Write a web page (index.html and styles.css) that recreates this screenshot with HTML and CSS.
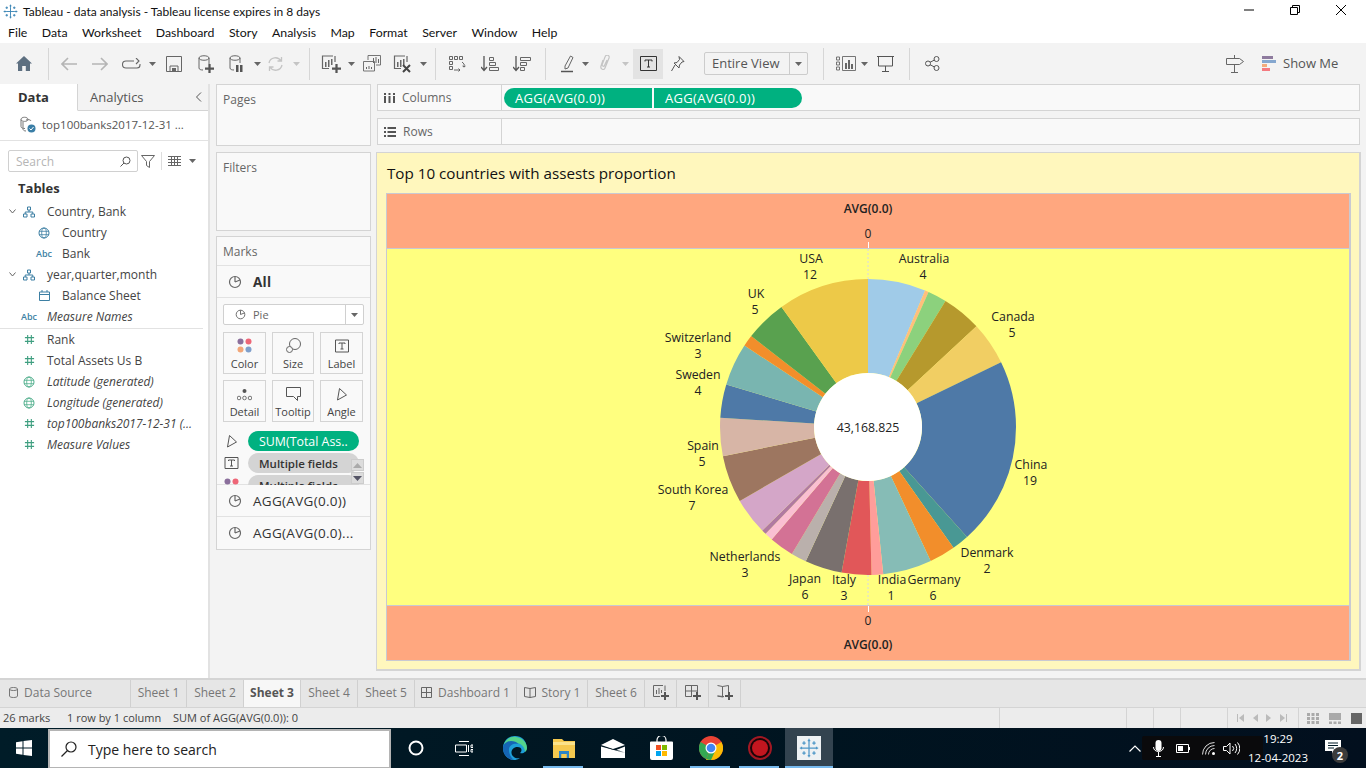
FILE: index.html
```html
<!DOCTYPE html>
<html lang="en">
<head>
    <meta charset="UTF-8">
    <title>Tableau - data analysis</title>
    <link rel="stylesheet" href="styles.css">
</head>
<body>

<svg class="defs" xmlns="http://www.w3.org/2000/svg">
    <symbol id="i-tableau" viewBox="0 0 24 24"><path d="M12 5v14M5 12h14M12 1v4M10.500 3h3M12 19v4M10.500 21h3M1 12h4M3 10.500v3M19 12h4M21 10.500v3M6 4v4M4 6h4M18 4v4M16 6h4M6 16v4M4 18h4M18 16v4M16 18h4" fill="none" stroke="currentColor" stroke-width="1.500"/></symbol>
    <symbol id="i-pie" viewBox="0 0 14 14"><circle cx="7" cy="7" r="5.500" fill="none" stroke="#666" stroke-width="1.200"/><path d="M7 7V1.500M7 7l5-2" fill="none" stroke="#666" stroke-width="1.200"/></symbol>
    <symbol id="i-hash" viewBox="0 0 12 12"><path d="M4 1v10M8 1v10M1 4h10M1 8h10" fill="none" stroke="#3f9f80" stroke-width="1.200"/></symbol>
    <symbol id="i-globe" viewBox="0 0 12 12"><circle cx="6" cy="6" r="5" fill="none" stroke="currentColor"/><ellipse cx="6" cy="6" rx="2.300" ry="5" fill="none" stroke="currentColor" stroke-width=".8"/><path d="M1 4.300h10M1 7.700h10" stroke="currentColor" stroke-width=".8"/></symbol>
    <symbol id="i-tree" viewBox="0 0 12 12"><path d="M4.500 1h3v3h-3zM.5 8h3.500v3H.5zM8 8h3.500v3H8zM6 4v2M2.200 8V6h7.600v2" fill="none" stroke="#3d7fa3"/></symbol>
    <symbol id="i-plus" viewBox="0 0 8 8"><path d="M3 0h2v3h3v2H5v3H3V5H0V3h3z" fill="#555"/></symbol>
    <symbol id="i-caret" viewBox="0 0 7 4"><path d="M0 0h7L3.500 4z" fill="currentColor"/></symbol>
    <symbol id="i-chart" viewBox="0 0 16 16"><path d="M12 1H1.500v12.500H8" fill="none" stroke="#666" stroke-width="1.200"/><path d="M14 1v6" stroke="#666" stroke-width="1.200"/><path d="M4 7h1.500v5H4zM7 5h1.500v7H7zM10 4h1.500v6H10z" fill="#666"/></symbol>
</svg>

<div class="app">
    <header class="titlebar">
        <svg class="title-logo"><use href="#i-tableau"/></svg>
        <span class="title-text">Tableau - data analysis - Tableau license expires in 8 days</span>
        <div class="win-btns">
            <svg width="12" height="12" viewBox="0 0 12 12"><path d="M1 6h10" stroke="#000"/></svg>
            <svg width="12" height="12" viewBox="0 0 12 12"><path d="M1.500 3.500h7v7h-7zM3.500 3.500v-2h7v7h-2" fill="none" stroke="#000"/></svg>
            <svg width="12" height="12" viewBox="0 0 12 12"><path d="M1 1l10 10M11 1L1 11" stroke="#000"/></svg>
        </div>
    </header>

    <nav class="menubar">
        <span>File</span><span>Data</span><span>Worksheet</span><span>Dashboard</span><span>Story</span><span>Analysis</span><span>Map</span><span>Format</span><span>Server</span><span>Window</span><span>Help</span>
    </nav>

    <div class="toolbar">
        <svg width="16" height="15" viewBox="0 0 16 15"><path d="M8 0l8 7.500h-2V15H9.800v-5H6.200v5H2V7.500H0z" fill="#5d6f80"/></svg>
        <i class="sep"></i>
        <svg width="16" height="14" viewBox="0 0 16 14"><path d="M7 1L1 7l6 6M1 7h15" fill="none" stroke="#b5b5b5" stroke-width="1.600"/></svg>
        <svg width="16" height="14" viewBox="0 0 16 14"><path d="M9 1l6 6-6 6M0 7h15" fill="none" stroke="#b5b5b5" stroke-width="1.600"/></svg>
        <svg width="19" height="12" viewBox="0 0 19 12"><path d="M12 3H4a3 3 0 0 0 0 7h11a3 3 0 0 0 3-3V6M14 0l3 3-3 3" fill="none" stroke="#666" stroke-width="1.100"/></svg>
        <svg class="caret"><use href="#i-caret"/></svg>
        <svg width="16" height="16" viewBox="0 0 16 16"><path d="M.5.500h15v15H.5zM4 15.500V10h8v5.500" fill="none" stroke="#666"/><path d="M6 12h4v3H6z" fill="#666"/></svg>
        <svg width="16" height="18" viewBox="0 0 16 18"><path d="M11 9V3c0-3-10-3-10 0v10c0 1.500 2 2 4 2M1 3c0 3 10 3 10 0" fill="none" stroke="#666"/><use href="#i-plus" x="7" y="9" width="9" height="9"/></svg>
        <svg width="15" height="18" viewBox="0 0 15 18"><path d="M11 8V3c0-3-10-3-10 0v10c0 1.500 2 2 4 2M1 3c0 3 10 3 10 0" fill="none" stroke="#666"/><path d="M7 10h2.500v7H7zM11 10h2.500v7H11z" fill="#555"/></svg>
        <svg class="caret"><use href="#i-caret"/></svg>
        <svg width="17" height="16" viewBox="0 0 17 16"><path d="M2 7a6.500 6.500 0 0 1 12-2M15 9a6.500 6.500 0 0 1-12 2M14.500 1v4h-4M2.500 15v-4h4" fill="none" stroke="#c4c4c4" stroke-width="1.300"/></svg>
        <svg class="caret caret--off"><use href="#i-caret"/></svg>
        <i class="sep"></i>
        <svg width="20" height="18" viewBox="0 0 20 18"><use href="#i-chart" width="16" height="16"/><use href="#i-plus" x="11" y="9" width="9" height="9"/></svg>
        <svg class="caret"><use href="#i-caret"/></svg>
        <svg width="18" height="18" viewBox="0 0 18 18"><path d="M5 5V.500h12.500V10H13M.5 6.500h11V16H.5z" fill="#f3f3f3" stroke="#666" stroke-width=".9"/><path d="M10 3h1v5h-1zM12.500 2h1v6h-1zM15 4h1v4h-1zM3 12h1v2H3zM5.500 11h1v3h-1zM8 12h1v2H8z" fill="#666"/></svg>
        <svg width="19" height="18" viewBox="0 0 19 18"><use href="#i-chart" width="16" height="16"/><path d="M10 10l7 7M17 10l-7 7" stroke="#444" stroke-width="2"/></svg>
        <svg class="caret"><use href="#i-caret"/></svg>
        <i class="sep"></i>
        <svg width="17" height="16" viewBox="0 0 17 16"><path d="M.5.500h3v3h-3zM5.500.500h3v3h-3zM10.500.500h3v3h-3zM.5 5.500h3v3h-3zM.5 10.500h3v3h-3zM5 14h6l-1.500-1.500M11 14l-1.500 1.500M13 6a4 4 0 0 1 2 5l-1.500-1M15 11l1.500-1" fill="none" stroke="#555" stroke-width=".9"/></svg>
        <svg width="18" height="16" viewBox="0 0 18 16"><path d="M3 0v14M0 11l3 3.500L6 11" fill="none" stroke="#555" stroke-width="1.300"/><path d="M8.500 1.500h4v3h-4zM8.500 6.500h6v3h-6zM8.500 11.500h9v3h-9z" fill="none" stroke="#666"/></svg>
        <svg width="18" height="16" viewBox="0 0 18 16"><path d="M3 0v14M0 11l3 3.500L6 11" fill="none" stroke="#555" stroke-width="1.300"/><path d="M7.500 1.500h10v3h-10zM7.500 6.500h6v3h-6zM7.500 11.500h4v3h-4z" fill="none" stroke="#666"/></svg>
        <i class="sep"></i>
        <svg width="14" height="18" viewBox="0 0 14 18"><path d="M4 11L9.500 1l2.500 1.500L7 13l-3 1z" fill="none" stroke="#666"/><path d="M0 16.500h12" stroke="#555" stroke-width="1.500"/></svg>
        <svg class="caret"><use href="#i-caret"/></svg>
        <svg width="12" height="18" viewBox="0 0 12 18"><path d="M4 5L2 11c-1 3 3 5 4 2l4-10c1-3-3-4-4-1L3 10c0 1 2 2 2.500 .5L8 5" fill="none" stroke="#c4c4c4" stroke-width="1.200"/></svg>
        <svg class="caret caret--off"><use href="#i-caret"/></svg>
        <div class="tb-active">
            <svg width="17" height="15" viewBox="0 0 17 15"><path d="M.5.500h16v14H.5z" fill="none" stroke="#333"/><path d="M5 4h7v1.500M5 5.500V4M8.500 4v7M7 11h3" fill="none" stroke="#333"/></svg>
        </div>
        <svg width="14" height="16" viewBox="0 0 14 16"><path d="M8 .5l5 5-2 .5-2.500 3-.5 3-5-5 3-.5 2.500-3zM4 9l-3.500 6" fill="none" stroke="#555"/></svg>
        <div class="fit-box">
            <span class="fit-text">Entire View</span>
            <span class="fit-arrow"><svg class="caret"><use href="#i-caret"/></svg></span>
        </div>
        <i class="sep"></i>
        <svg width="20" height="15" viewBox="0 0 20 15"><path d="M.5 1h3v3h-3zM.5 6h3v3h-3zM.5 11h3v3h-3zM6.500.5h13v14h-13z" fill="none" stroke="#666" stroke-width=".9"/><path d="M9 7h2v6H9zM12 4h2v9h-2zM15 8h2v5h-2z" fill="#666"/></svg>
        <svg class="caret"><use href="#i-caret"/></svg>
        <svg width="17" height="16" viewBox="0 0 17 16"><path d="M0 .5h17M1.500 1v9h14V1M8.500 10v5M5 15.500h7" fill="none" stroke="#555"/></svg>
        <i class="sep"></i>
        <svg width="15" height="15" viewBox="0 0 15 15"><circle cx="3" cy="7.500" r="2.500" fill="none" stroke="#555"/><circle cx="11.500" cy="3" r="2.500" fill="none" stroke="#555"/><circle cx="11.500" cy="12" r="2.500" fill="none" stroke="#555"/><path d="M5 6.300l4.500-2.300M5 8.700l4.500 2.300" stroke="#555"/></svg>
        <svg width="18" height="18" viewBox="0 0 18 18"><path d="M8.500 0v3M.5 3.500h13l4 3-4 3H.5zM8.500 10v7M5 17.500h7" fill="none" stroke="#666"/></svg>
        <div class="showme">
            <svg width="14" height="15" viewBox="0 0 14 15"><path d="M0 0h11v3H0z" fill="#8e7b9e"/><path d="M0 4h14v3H0z" fill="#85a7cf"/><path d="M0 8h5v3H0z" fill="#f2ab7c"/><path d="M0 12h8v3H0z" fill="#f47a80"/></svg>
            <span>Show Me</span>
        </div>
    </div>

    <main class="main">
        <aside class="side">
            <div class="side-tabs">
                <span class="side-tab side-tab--on">Data</span>
                <span class="side-tab">Analytics</span>
                <svg class="side-collapse" width="7" height="10" viewBox="0 0 7 10"><path d="M6 .5L1.500 5 6 9.500" fill="none" stroke="#555"/></svg>
            </div>
            <div class="source">
                <svg width="17" height="17" viewBox="0 0 17 17"><path d="M9 3.500C9 .5 2 .5 2 3.500v7c0 1.500 2 2 4 2" fill="none" stroke="#777"/><path d="M2 3.500c0 2.500 7 2.500 7 0M4 6v7c0 1 1 2 3 2M12 5c0-1-3-2-5-1" fill="none" stroke="#777"/><circle cx="12.500" cy="12.500" r="4" fill="#3a7ea6"/><path d="M10.500 12.500l1.500 1.500 2.500-3" fill="none" stroke="#fff"/></svg>
                <span>top100banks2017-12-31 ...</span>
            </div>
            <div class="search-row">
                <div class="search-box">
                    <span>Search</span>
                    <svg width="11" height="11" viewBox="0 0 11 11"><circle cx="6.500" cy="4.500" r="3.500" fill="none" stroke="#555"/><path d="M4 7l-3.500 3.500" stroke="#555"/></svg>
                </div>
                <svg width="14" height="13" viewBox="0 0 14 13"><path d="M.5.500h13L8.500 6.500v6l-3-2v-4z" fill="none" stroke="#666"/></svg>
                <i class="search-sep"></i>
                <svg width="13" height="10" viewBox="0 0 13 10"><path d="M0 0h13v1H0zM0 3h13v1H0zM0 6h13v1H0zM0 9h13v1H0zM3 0h1v10H3zM6 0h1v10H6zM9 0h1v10H9z" fill="#666"/></svg>
                <svg class="caret caret--side"><use href="#i-caret"/></svg>
            </div>
            <h2 class="tables-title">Tables</h2>
            <ul class="fields">
                <li class="field"><span class="chev"><svg width="7" height="5" viewBox="0 0 7 5"><path d="M.5.500L3.500 4l3-3.500" fill="none" stroke="#666"/></svg></span><span class="ico"><svg width="12" height="12"><use href="#i-tree"/></svg></span>Country, Bank</li>
                <li class="field"><span class="chev chev--deep"></span><span class="ico ico--blue"><svg width="12" height="12"><use href="#i-globe"/></svg></span>Country</li>
                <li class="field"><span class="chev chev--deep"></span><span class="ico abc">Abc</span>Bank</li>
                <li class="field"><span class="chev"><svg width="7" height="5" viewBox="0 0 7 5"><path d="M.5.500L3.500 4l3-3.500" fill="none" stroke="#666"/></svg></span><span class="ico"><svg width="12" height="12"><use href="#i-tree"/></svg></span>year,quarter,month</li>
                <li class="field"><span class="chev chev--deep"></span><span class="ico"><svg width="11" height="11" viewBox="0 0 11 11"><path d="M.5 2h10v8.500H.5zM.5 4.500h10M3 0v2M8 0v2" fill="none" stroke="#3d7fa3"/></svg></span>Balance Sheet</li>
                <li class="field field--calc field--last"><span class="chev"></span><span class="ico abc">Abc</span>Measure Names</li>
                <li class="field"><span class="chev"></span><span class="ico"><svg width="11" height="11"><use href="#i-hash"/></svg></span>Rank</li>
                <li class="field"><span class="chev"></span><span class="ico"><svg width="11" height="11"><use href="#i-hash"/></svg></span>Total Assets Us B</li>
                <li class="field field--calc"><span class="chev"></span><span class="ico ico--green"><svg width="12" height="12"><use href="#i-globe"/></svg></span>Latitude (generated)</li>
                <li class="field field--calc"><span class="chev"></span><span class="ico ico--green"><svg width="12" height="12"><use href="#i-globe"/></svg></span>Longitude (generated)</li>
                <li class="field field--calc"><span class="chev"></span><span class="ico"><svg width="11" height="11"><use href="#i-hash"/></svg></span>top100banks2017-12-31 (...</li>
                <li class="field field--calc"><span class="chev"></span><span class="ico"><svg width="11" height="11"><use href="#i-hash"/></svg></span>Measure Values</li>
            </ul>
        </aside>

        <section class="cards">
            <div class="card card--pages"><span class="card-title">Pages</span></div>
            <div class="card card--filters"><span class="card-title">Filters</span></div>
            <div class="card card--marks">
                <div class="marks-head"><span class="card-title">Marks</span></div>
                <div class="marks-row marks-row--all"><svg width="14" height="14"><use href="#i-pie"/></svg><b>All</b></div>
                <div class="marks-body">
                    <div class="mark-type">
                        <span class="mark-type-name"><svg width="11" height="11"><use href="#i-pie"/></svg>Pie</span>
                        <span class="mark-type-arrow"><svg class="caret"><use href="#i-caret"/></svg></span>
                    </div>
                    <div class="mark-btns">
                        <div class="mark-btn">
                            <svg width="15" height="15" viewBox="0 0 15 15"><circle cx="3.500" cy="3.500" r="3" fill="#8b6f9c"/><circle cx="11.500" cy="3.500" r="3" fill="#ee6677"/><circle cx="3.500" cy="11.500" r="3" fill="#f2a678"/><circle cx="11.500" cy="11.500" r="3" fill="#7f9fcb"/></svg>
                            <span>Color</span>
                        </div>
                        <div class="mark-btn">
                            <svg width="15" height="15" viewBox="0 0 15 15"><circle cx="9" cy="6" r="5.500" fill="none" stroke="#666"/><circle cx="3.500" cy="11.500" r="3" fill="#f8f8f8" stroke="#666"/></svg>
                            <span>Size</span>
                        </div>
                        <div class="mark-btn">
                            <svg width="14" height="14" viewBox="0 0 14 14"><path d="M.5 1h13v12H.5z" fill="none" stroke="#555"/><path d="M4 4h6v1M4 5V4M7 4v6M5.500 10h3" fill="none" stroke="#555"/></svg>
                            <span>Label</span>
                        </div>
                        <div class="mark-btn">
                            <svg width="15" height="13" viewBox="0 0 15 13"><circle cx="7.500" cy="3" r="2" fill="#555"/><g fill="none" stroke="#555" stroke-width=".8"><circle cx="2" cy="10" r="1.800"/><circle cx="7.500" cy="10" r="1.800"/><circle cx="13" cy="10" r="1.800"/></g></svg>
                            <span>Detail</span>
                        </div>
                        <div class="mark-btn">
                            <svg width="15" height="14" viewBox="0 0 15 14"><path d="M.5.500h14v9h-3v4l-4-4h-7z" fill="none" stroke="#555"/></svg>
                            <span>Tooltip</span>
                        </div>
                        <div class="mark-btn">
                            <svg width="11" height="13" viewBox="0 0 11 13"><path d="M3.500.5l7 6.500-9 5z" fill="none" stroke="#555"/></svg>
                            <span>Angle</span>
                        </div>
                    </div>
                    <div class="mark-pills">
                        <div class="mark-pill-row">
                            <svg width="11" height="13" viewBox="0 0 11 13"><path d="M3.500.5l7 6.500-9 5z" fill="none" stroke="#555"/></svg>
                            <span class="pill pill--green">SUM(Total Ass..</span>
                        </div>
                        <div class="mark-pill-row">
                            <svg width="14" height="12" viewBox="0 0 14 12"><path d="M.5.500h13v11H.5z" fill="none" stroke="#555"/><path d="M4 3h6v1M4 4V3M7 3v6M5.500 9h3" fill="none" stroke="#555"/></svg>
                            <span class="pill pill--grey">Multiple fields</span>
                        </div>
                        <div class="mark-pill-row">
                            <svg width="15" height="15" viewBox="0 0 15 15"><circle cx="3.500" cy="3.500" r="3" fill="#8b6f9c"/><circle cx="11.500" cy="3.500" r="3" fill="#ee6677"/></svg>
                            <span class="pill pill--grey">Multiple fields</span>
                        </div>
                        <div class="mark-scroll">
                            <span><svg width="9" height="5" viewBox="0 0 9 5"><path d="M0 5h9L4.500 0z" fill="#aaa"/></svg></span>
                            <span><svg width="9" height="5" viewBox="0 0 9 5"><path d="M0 0h9L4.500 5z" fill="#556"/></svg></span>
                        </div>
                    </div>
                </div>
                <div class="marks-row"><svg width="14" height="14"><use href="#i-pie"/></svg><span>AGG(AVG(0.0))</span></div>
                <div class="marks-row"><svg width="14" height="14"><use href="#i-pie"/></svg><span>AGG(AVG(0.0)...</span></div>
            </div>
        </section>

        <section class="work">
            <div class="shelf">
                <div class="shelf-label">
                    <svg width="11" height="10" viewBox="0 0 11 10"><path d="M0 0h2v2H0zM4.500 0h2v2h-2zM9 0h2v2H9zM0 3h2v7H0zM4.500 3h2v7h-2zM9 3h2v7H9z" fill="#555"/></svg>
                    <span>Columns</span>
                </div>
                <div class="shelf-pills">
                    <span class="pill pill--col pill--left">AGG(AVG(0.0))</span>
                    <span class="pill pill--col pill--right">AGG(AVG(0.0))</span>
                </div>
            </div>
            <div class="shelf">
                <div class="shelf-label">
                    <svg width="12" height="10" viewBox="0 0 12 10"><path d="M0 0h2v2H0zM3.500 0H12v2H3.500zM0 4h2v2H0zM3.500 4H12v2H3.500zM0 8h2v2H0zM3.500 8H12v2H3.500z" fill="#555"/></svg>
                    <span>Rows</span>
                </div>
            </div>
            <div class="viz">
                <h1 class="viz-title">Top 10 countries with assests proportion</h1>
                <div class="chart">
                    <div class="axis axis--top">
                        <b>AVG(0.0)</b>
                        <span>0</span>
                        <i class="axis-tick"></i>
                    </div>
                    <div class="pane">
                        <svg class="pie" viewBox="387 249 963 356" width="963" height="356">
                            <path d="M868 249v30M868 575v30" stroke="#d8d8e6" stroke-dasharray="2 2"/>
                            <g class="slices" transform="rotate(-90 868 427)" fill="none" stroke-width="94">
                                <circle cx="868" cy="427" r="101" pathLength="360" stroke="#a0cbe8" stroke-dasharray="22.7 337.300" stroke-dashoffset="0"/>
                                <circle cx="868" cy="427" r="101" pathLength="360" stroke="#ffbe7d" stroke-dasharray="1.500 358.500" stroke-dashoffset="-22.700"/>
                                <circle cx="868" cy="427" r="101" pathLength="360" stroke="#8cd17d" stroke-dasharray="7.400 352.600" stroke-dashoffset="-24.200"/>
                                <circle cx="868" cy="427" r="101" pathLength="360" stroke="#b6992d" stroke-dasharray="15.500 344.500" stroke-dashoffset="-31.600"/>
                                <circle cx="868" cy="427" r="101" pathLength="360" stroke="#f1ce63" stroke-dasharray="16.900 343.100" stroke-dashoffset="-47.100"/>
                                <circle cx="868" cy="427" r="101" pathLength="360" stroke="#4e79a7" stroke-dasharray="74 286" stroke-dashoffset="-64"/>
                                <circle cx="868" cy="427" r="101" pathLength="360" stroke="#499894" stroke-dasharray="6.700 353.300" stroke-dashoffset="-138"/>
                                <circle cx="868" cy="427" r="101" pathLength="360" stroke="#f28e2b" stroke-dasharray="10.200 349.800" stroke-dashoffset="-144.700"/>
                                <circle cx="868" cy="427" r="101" pathLength="360" stroke="#86bcb6" stroke-dasharray="19.100 340.900" stroke-dashoffset="-154.900"/>
                                <circle cx="868" cy="427" r="101" pathLength="360" stroke="#ff9d9a" stroke-dasharray="4.600 355.400" stroke-dashoffset="-174"/>
                                <circle cx="868" cy="427" r="101" pathLength="360" stroke="#e15759" stroke-dasharray="11.700 348.300" stroke-dashoffset="-178.600"/>
                                <circle cx="868" cy="427" r="101" pathLength="360" stroke="#79706e" stroke-dasharray="14.600 345.400" stroke-dashoffset="-190.300"/>
                                <circle cx="868" cy="427" r="101" pathLength="360" stroke="#bab0ac" stroke-dasharray="6.100 353.900" stroke-dashoffset="-204.900"/>
                                <circle cx="868" cy="427" r="101" pathLength="360" stroke="#d37295" stroke-dasharray="9.600 350.400" stroke-dashoffset="-211"/>
                                <circle cx="868" cy="427" r="101" pathLength="360" stroke="#fabfd2" stroke-dasharray="3.200 356.800" stroke-dashoffset="-220.600"/>
                                <circle cx="868" cy="427" r="101" pathLength="360" stroke="#b07aa1" stroke-dasharray="1.800 358.200" stroke-dashoffset="-223.800"/>
                                <circle cx="868" cy="427" r="101" pathLength="360" stroke="#d4a6c8" stroke-dasharray="14.400 345.600" stroke-dashoffset="-225.600"/>
                                <circle cx="868" cy="427" r="101" pathLength="360" stroke="#9d7660" stroke-dasharray="18.600 341.400" stroke-dashoffset="-240"/>
                                <circle cx="868" cy="427" r="101" pathLength="360" stroke="#d7b5a6" stroke-dasharray="15.100 344.900" stroke-dashoffset="-258.600"/>
                                <circle cx="868" cy="427" r="101" pathLength="360" stroke="#4e79a7" stroke-dasharray="13.100 346.900" stroke-dashoffset="-273.700"/>
                                <circle cx="868" cy="427" r="101" pathLength="360" stroke="#79b5b0" stroke-dasharray="16.600 343.400" stroke-dashoffset="-286.800"/>
                                <circle cx="868" cy="427" r="101" pathLength="360" stroke="#f28e2b" stroke-dasharray="4.500 355.500" stroke-dashoffset="-303.400"/>
                                <circle cx="868" cy="427" r="101" pathLength="360" stroke="#59a14f" stroke-dasharray="16.300 343.700" stroke-dashoffset="-307.900"/>
                                <circle cx="868" cy="427" r="101" pathLength="360" stroke="#edc948" stroke-dasharray="35.800 324.200" stroke-dashoffset="-324.200"/>
                            </g>
                            <circle cx="868" cy="427" r="54" fill="#fff"/>
                            <g class="pie-labels">
                                <text x="868" y="432">43,168.825</text>
                                <text x="811" y="263">USA</text><text x="810" y="279">12</text>
                                <text x="924" y="263">Australia</text><text x="923" y="279">4</text>
                                <text x="1013" y="321">Canada</text><text x="1012" y="337">5</text>
                                <text x="756" y="298">UK</text><text x="755" y="314">5</text>
                                <text x="698" y="342">Switzerland</text><text x="698" y="358">3</text>
                                <text x="698" y="379">Sweden</text><text x="698" y="395">4</text>
                                <text x="703" y="450">Spain</text><text x="702" y="466">5</text>
                                <text x="693" y="494">South Korea</text><text x="692" y="510">7</text>
                                <text x="745" y="561">Netherlands</text><text x="745" y="577">3</text>
                                <text x="805" y="583">Japan</text><text x="805" y="599">6</text>
                                <text x="844" y="584">Italy</text><text x="844" y="600">3</text>
                                <text x="892" y="584">India</text><text x="891" y="600">1</text>
                                <text x="934" y="584">Germany</text><text x="933" y="600">6</text>
                                <text x="987" y="557">Denmark</text><text x="987" y="573">2</text>
                                <text x="1031" y="469">China</text><text x="1030" y="485">19</text>
                            </g>
                        </svg>
                    </div>
                    <div class="axis axis--bottom">
                        <i class="axis-tick"></i>
                        <span>0</span>
                        <b>AVG(0.0)</b>
                    </div>
                </div>
            </div>
        </section>
    </main>

    <div class="tabs">
        <span class="tab tab--source"><svg width="9" height="11" viewBox="0 0 9 11"><path d="M.5 2c0-2 8-2 8 0v7c0 2-8 2-8 0zM.5 2c0 2 8 2 8 0" fill="none" stroke="#777"/></svg>Data Source</span>
        <span class="tab">Sheet 1</span>
        <span class="tab">Sheet 2</span>
        <span class="tab tab--on">Sheet 3</span>
        <span class="tab">Sheet 4</span>
        <span class="tab">Sheet 5</span>
        <span class="tab"><svg width="11" height="11" viewBox="0 0 11 11"><path d="M.5.500h10v10H.5zM.5 5.500h10M5.500.500v10" fill="none" stroke="#666"/></svg>Dashboard 1</span>
        <span class="tab"><svg width="12" height="11" viewBox="0 0 12 11"><path d="M.5.500l5.500 1 5.500-1v9l-5.500 1-5.500-1zM6 1.500v9" fill="none" stroke="#666"/></svg>Story 1</span>
        <span class="tab">Sheet 6</span>
        <span class="tab"><svg width="16" height="15" viewBox="0 0 16 15"><path d="M10 .5H.5v11H7M12 .5V6" fill="none" stroke="#666"/><path d="M3 5h1v4H3zM5.500 3h1v6h-1zM8 5h1v3H8z" fill="#666"/><use href="#i-plus" x="8" y="7" width="8" height="8"/></svg></span>
        <span class="tab"><svg width="16" height="15" viewBox="0 0 16 15"><path d="M.5.500h12V7M7 11.500H.5V.5M.5 6h12M6.500.5v11" fill="none" stroke="#666"/><use href="#i-plus" x="8" y="7" width="8" height="8"/></svg></span>
        <span class="tab"><svg width="16" height="15" viewBox="0 0 16 15"><path d="M.5.500l5 1 6-1V7M7 11.500l-1.500.5-5-1zM5.500 1.500V12" fill="none" stroke="#666"/><use href="#i-plus" x="8" y="7" width="8" height="8"/></svg></span>
    </div>

    <div class="status">
        <span class="status-item status-item--marks">26 marks</span>
        <span class="status-item status-item--rows">1 row by 1 column</span>
        <span class="status-item">SUM of AGG(AVG(0.0)): 0</span>
        <div class="status-cells">
            <i class="cell cell--a"></i><i class="cell cell--b"></i><i class="cell cell--c"></i><i class="cell cell--d"></i>
            <div class="cell cell--nav">
                <svg width="7" height="8" viewBox="0 0 7 8"><path d="M0 0h1v8H0zM7 0v8L2 4z" fill="#bbb"/></svg>
                <svg width="5" height="8" viewBox="0 0 5 8"><path d="M5 0v8L0 4z" fill="#bbb"/></svg>
                <svg width="5" height="8" viewBox="0 0 5 8"><path d="M0 0v8l5-4z" fill="#bbb"/></svg>
                <svg width="7" height="8" viewBox="0 0 7 8"><path d="M6 0h1v8H6zM0 0v8l5-4z" fill="#bbb"/></svg>
            </div>
            <div class="cell cell--views">
                <svg width="12" height="11" viewBox="0 0 12 11"><path d="M0 0h3v3H0zM4.500 0h3v3h-3zM9 0h3v3H9zM0 4h3v3H0zM4.500 4h3v3h-3zM9 4h3v3H9zM0 8h3v3H0zM4.500 8h3v3h-3zM9 8h3v3H9z" fill="#aaa"/></svg>
                <svg width="12" height="11" viewBox="0 0 12 11"><path d="M0 0h12v7H0zM0 8.500h3V11H0zM4.500 8.500h3V11h-3zM9 8.500h3V11H9z" fill="#aaa"/></svg>
                <svg width="11" height="11" viewBox="0 0 11 11"><path d="M0 0h11v11H0z" fill="#666"/></svg>
            </div>
        </div>
    </div>

    <footer class="taskbar">
        <div class="start"><svg width="16" height="16" viewBox="0 0 16 16"><path d="M0 2.300l6.500-1v6.200H0zM7.500 1.100L16 0v7.500H7.500zM0 8.500h6.500v6.200l-6.500-1zM7.500 8.500H16V16l-8.500-1.100z" fill="#fff"/></svg></div>
        <div class="task-search">
            <svg width="16" height="16" viewBox="0 0 16 16"><circle cx="10" cy="6" r="5" fill="none" stroke="#222" stroke-width="1.200"/><path d="M6.500 9.500L.5 15.500" stroke="#222" stroke-width="1.200"/></svg>
            <span>Type here to search</span>
        </div>
        <div class="task-apps">
            <span class="task-app task-app--sys"><svg width="16" height="16" viewBox="0 0 16 16"><circle cx="8" cy="8" r="6.500" fill="none" stroke="#fff" stroke-width="2"/></svg></span>
            <span class="task-app task-app--sys task-app--view"><svg width="18" height="15" viewBox="0 0 18 15"><path d="M4 .5h10M4 14.500h10M.5 4h11v7H.5zM13.500 4v7M16 4h2v2.500h-2zM16 8.500h2V11h-2z" fill="none" stroke="#fff"/></svg></span>
            <span class="task-app"><svg width="24" height="24" viewBox="0 0 24 24"><path d="M12 0C5 0 0 5.500 0 12c0 7 5.500 12 11 12 2 0 4-.500 6-2-4 1-8-1-8.500-5-.3-3 2-6 6-6 2.500 0 4 1 4 3s-1.500 3-1.500 3c3 1 6.500-1 6.500-5C24 5 19 0 12 0z" fill="#1e9fd8"/><path d="M1 8c2-5 7-8 12-7 6 1 11 5 11 11 0 2-1 3-2 4 0-5-4-9-9-9-4 0-8 1-12 1z" fill="#54d38c"/><path d="M0 12c0-4 4-7 8-7 3 0 6 1 7.500 3-5-1-9 1-9.500 5-.5 4 2 9 5 11C5 23.500 0 19 0 12z" fill="#1565b5"/></svg></span>
            <span class="task-app task-app--on"><svg width="22" height="20" viewBox="0 0 22 20"><path d="M0 1h9l2 2h11v17H0z" fill="#f5c94f"/><path d="M0 4h22v3H0z" fill="#fbe28a"/><path d="M6 13h10v7h-2.500v-4h-5v4H6z" fill="#2a84c9"/><path d="M8.500 16h5v4h-5z" fill="#f5c94f"/></svg></span>
            <span class="task-app"><svg width="24" height="19" viewBox="0 0 24 19"><path d="M0 6L12 0l12 6-12 4z" fill="#fff"/><path d="M0 7.500L24 14l-9-3 9-3.500V19H0z" fill="#fff"/><path d="M0 7l13 4 11-4-9 3.500 9 3z" fill="#001a26"/></svg></span>
            <span class="task-app"><svg width="23" height="24" viewBox="0 0 23 24"><path d="M7 6V4a4.500 4.500 0 0 1 9 0v2" fill="none" stroke="#fff" stroke-width="1.200"/><path d="M1 5.500h21a1 1 0 0 1 1 1V22a2 2 0 0 1-2 2H2a2 2 0 0 1-2-2V6.500a1 1 0 0 1 1-1z" fill="#fff"/><path d="M6 9h5v5H6z" fill="#f25022"/><path d="M12 9h5v5h-5z" fill="#7fba00"/><path d="M6 15h5v5H6z" fill="#00a4ef"/><path d="M12 15h5v5h-5z" fill="#ffb900"/></svg></span>
            <span class="task-app task-app--on"><svg width="24" height="24" viewBox="0 0 24 24"><circle cx="12" cy="12" r="12" fill="#ea4335"/><path d="M12 12L1.600 6A12 12 0 0 0 7 23z" fill="#34a853"/><path d="M12 12l10.400-6A12 12 0 0 1 12 24H7z" fill="#fbbc05"/><path d="M12 12l-5 11a12 12 0 0 0 5 1l5-11z" fill="#34a853"/><circle cx="12" cy="12" r="5.500" fill="#fff"/><circle cx="12" cy="12" r="4.300" fill="#4285f4"/></svg></span>
            <span class="task-app task-app--on"><svg width="24" height="24" viewBox="0 0 24 24"><circle cx="12" cy="12" r="11" fill="#1a0508" stroke="#a21823" stroke-width="2"/><circle cx="12" cy="12" r="8" fill="#c3161f"/></svg></span>
            <span class="task-app task-app--on task-app--active"><span class="tableau-tile"><svg width="20" height="20"><use href="#i-tableau"/></svg></span></span>
        </div>
        <div class="tray">
            <svg class="tray-up" width="12" height="7" viewBox="0 0 12 7"><path d="M.5 6.500L6 1l5.500 5.500" fill="none" stroke="#fff" stroke-width="1.200"/></svg>
            <div class="tray-box">
                <svg width="11" height="17" viewBox="0 0 11 17"><rect x="2.500" width="6" height="11" rx="3" fill="#fff"/><path d="M.5 7c0 6 10 6 10 0M5.500 12v4M3 16.500h5" fill="none" stroke="#fff"/></svg>
                <svg width="14" height="9" viewBox="0 0 14 9"><path d="M.5.500h12v8H.5z" fill="none" stroke="#fff"/><path d="M2 2h5v5H2zM13 3h1v3h-1z" fill="#fff"/></svg>
                <svg width="15" height="13" viewBox="0 0 15 13"><path d="M.5 12.500a12 12 0 0 1 12-12M3.500 12.500a9 9 0 0 1 9-9M6.500 12.500a6 6 0 0 1 6-6" fill="none" stroke="#ddd"/><circle cx="11.500" cy="11.500" r="1.500" fill="#fff"/></svg>
                <svg width="17" height="13" viewBox="0 0 17 13"><path d="M.5 4.500h3l3.500-3.500v11l-3.500-3.500h-3zM9.500 4a3.500 3.500 0 0 1 0 5M12 2a7 7 0 0 1 0 9M14.500 .5a9 9 0 0 1 0 12" fill="none" stroke="#fff"/></svg>
            </div>
            <div class="clock"><span>19:29</span><span>12-04-2023</span></div>
            <div class="notify">
                <svg width="16" height="14" viewBox="0 0 16 14"><path d="M0 0h16v11H9l-2 3v-3H0z" fill="#fff"/><path d="M3 3h10M3 5.500h10M3 8h6" stroke="#001a26"/></svg>
                <span class="notify-badge">2</span>
            </div>
        </div>
    </footer>
</div>

</body>
</html>
```

FILE: styles.css
```css
* {
    box-sizing: border-box;
}

body {
    margin: 0;
    font-family: "Open Sans", "Liberation Sans", sans-serif;
    font-size: 12px;
    color: #333;
    background: #fff;
}

.defs {
    display: none;
}

svg {
    display: block;
    flex: none;
}

.app {
    width: 1366px;
    height: 768px;
    display: flex;
    flex-direction: column;
    overflow: hidden;
}

/* title + menu */
.titlebar {
    height: 22px;
    display: flex;
    align-items: center;
    padding-left: 3px;
    font-family: Lato, "Liberation Sans", sans-serif;
    font-size: 12px;
    color: #111;
    background: #fff;
}

.title-logo {
    width: 15px;
    height: 15px;
    margin-right: 5px;
    color: #3d86b5;
}

.win-btns {
    margin-left: auto;
    display: flex;
    gap: 34px;
    padding: 0 19px 2px 0;
}

.menubar {
    height: 21px;
    display: flex;
    align-items: center;
    gap: 14.500px;
    padding-left: 8px;
    font-family: Lato, "Liberation Sans", sans-serif;
    font-size: 12.300px;
    color: #111;
    background: #fff;
}

/* toolbar: tracks are the left edge distance between neighbours */
.toolbar {
    height: 41px;
    padding-left: 16px;
    display: grid;
    grid-template-columns: 32px 13px 31px 30px 27px 17px 32px 31px 25px 13px 26px 16px 12px 27px 15px 30px 27px 15px 14px 32px 32px 32px 16px 21px 17px 23px 11px 38px 33px 119px 13px 25px 16px 32px 16px 301px 36px auto;
    align-items: center;
    justify-items: start;
    background: #f3f3f3;
}

.sep {
    width: 1px;
    height: 32px;
    background: #d6d6d6;
}

.caret {
    width: 7px;
    height: 4px;
    color: #666;
}

.caret--off {
    color: #c4c4c4;
}

.tb-active {
    width: 30px;
    height: 30px;
    display: flex;
    align-items: center;
    justify-content: center;
    background: #e3e3e3;
}

.fit-box {
    width: 104px;
    height: 23px;
    display: flex;
    align-items: center;
    border: 1px solid #ccc;
    border-radius: 2px;
    font-size: 13px;
    color: #555;
}

.fit-text {
    flex: 1;
    padding: 0 0 2px 7px;
}

.fit-arrow {
    width: 18px;
    height: 100%;
    display: flex;
    align-items: center;
    justify-content: center;
    border-left: 1px solid #ccc;
}

.showme {
    display: flex;
    align-items: center;
    gap: 7px;
    font-size: 13px;
    color: #555;
}

.showme span {
    padding-bottom: 2px;
}

/* main area */
.main {
    height: 594px;
    display: flex;
    background: #f3f3f3;
}

.side {
    width: 210px;
    flex: none;
    background: #fff;
    border-right: 2px solid #e2e2e2;
}

.side-tabs {
    height: 27px;
    display: flex;
    align-items: center;
    position: relative;
    background: #f3f3f3;
    border-bottom: 1px solid #d4d4d4;
    font-size: 13px;
}

.side-tab {
    height: 27px;
    padding: 4px 0 0 13px;
    color: #555;
}

.side-tab--on {
    width: 78px;
    padding-left: 18px;
    margin-right: -1px;
    font-weight: 700;
    color: #333;
    background: #fff;
    border-right: 1px solid #d4d4d4;
    border-bottom: 1px solid #fff;
}

.side-collapse {
    position: absolute;
    left: 195px;
    top: 8px;
}

.source {
    height: 30px;
    display: flex;
    align-items: center;
    gap: 6px;
    padding: 0 0 2px 19px;
    font-size: 11.500px;
    color: #555;
    border-bottom: 1px solid #e2e2e2;
}

.search-row {
    height: 31px;
    display: flex;
    align-items: center;
    padding: 9px 0 0 8px;
}

.search-box {
    width: 130px;
    height: 22px;
    display: flex;
    align-items: center;
    justify-content: space-between;
    padding: 0 6px 0 7px;
    margin-right: 3px;
    border: 1px solid #d0d0d0;
    border-radius: 2px;
    color: #b5b5b5;
}

.search-sep {
    width: 1px;
    height: 18px;
    margin: 0 6px;
    background: #ddd;
}

.caret--side {
    margin-left: 8px;
}

.tables-title {
    margin: 0;
    height: 29px;
    padding: 7px 0 0 18px;
    font-size: 13px;
    font-weight: 700;
    color: #333;
    line-height: 18px;
}

.fields {
    list-style: none;
    margin: 0;
    padding: 0;
    color: #444;
}

.field {
    height: 21px;
    display: flex;
    align-items: center;
    padding-left: 8px;
}

.field--calc {
    font-style: italic;
}

.field--last {
    height: 23px;
    padding-bottom: 2px;
    margin: 0 5px 0 0;
    border-bottom: 1px solid #e2e2e2;
}

.chev {
    width: 13px;
    flex: none;
    padding-left: 1px;
}

.chev--deep {
    width: 28px;
}

.ico {
    width: 16px;
    flex: none;
    margin-right: 10px;
    display: flex;
    justify-content: center;
}

.ico--blue {
    color: #3d7fa3;
}

.ico--green {
    color: #4fae8c;
}

.abc {
    font-size: 9px;
    font-style: normal;
    font-weight: 600;
    color: #3d7fa3;
}

/* pages / filters / marks */
.cards {
    width: 155px;
    flex: none;
    margin-left: 6px;
    display: flex;
    flex-direction: column;
}

.card {
    background: #f9f9f9;
    border: 1px solid #d4d4d4;
}

.card-title {
    display: block;
    color: #666;
    padding: 6px 0 0 6px;
}

.card--pages {
    height: 62px;
}

.card--filters {
    height: 79px;
    margin-top: 6px;
}

.card--marks {
    height: 314px;
    margin-top: 5px;
}

.marks-head {
    height: 29px;
    border-bottom: 1px solid #e2e2e2;
}

.marks-row {
    height: 32px;
    display: flex;
    align-items: center;
    gap: 11px;
    padding-left: 11px;
    font-size: 13.500px;
    letter-spacing: .3px;
    color: #333;
    border-bottom: 1px solid #e2e2e2;
}

.marks-row:last-child {
    border-bottom: 0;
}

.marks-body {
    height: 187px;
    padding: 6px 6px 0;
    border-bottom: 1px solid #e2e2e2;
}

.mark-type {
    height: 21px;
    display: flex;
    align-items: center;
    border: 1px solid #d0d0d0;
    border-radius: 2px;
    background: #fff;
    font-size: 11px;
    color: #666;
}

.mark-type-name {
    flex: 1;
    display: flex;
    align-items: center;
    gap: 7px;
    padding-left: 11px;
}

.mark-type-arrow {
    width: 18px;
    height: 100%;
    display: flex;
    align-items: center;
    justify-content: center;
    border-left: 1px solid #d0d0d0;
}

.mark-btns {
    margin-top: 7px;
    display: grid;
    grid-template-columns: 43px 42px 43px;
    grid-auto-rows: 42px;
    gap: 6px;
}

.mark-btn {
    display: flex;
    flex-direction: column;
    align-items: center;
    justify-content: flex-end;
    gap: 3px;
    padding-bottom: 2px;
    border: 1px solid #d4d4d4;
    font-size: 11px;
    color: #444;
}

.mark-pills {
    position: relative;
    height: 55px;
    margin-top: 8px;
    overflow: hidden;
}

.mark-pill-row {
    height: 22px;
    display: flex;
    align-items: center;
    gap: 9px;
}

.mark-pill-row svg {
    width: 15px;
    margin-left: 1px;
}

.pill {
    height: 20px;
    display: flex;
    align-items: center;
    border-radius: 10px;
    padding-left: 11px;
    white-space: nowrap;
    flex: none;
}

.pill--green {
    width: 111px;
    background: #00b180;
    color: #fff;
    font-size: 12.400px;
}

.pill--grey {
    width: 111px;
    background: #d4d4d4;
    color: #333;
    font-weight: 600;
    font-size: 11.500px;
}

.mark-scroll {
    position: absolute;
    right: 0;
    top: 29px;
    width: 13px;
    display: flex;
    flex-direction: column;
    gap: 1px;
}

.mark-scroll span {
    height: 12px;
    display: flex;
    align-items: center;
    justify-content: center;
    background: #dcdcdc;
    border: 1px solid #ccc;
}

/* shelves and view */
.work {
    width: 984px;
    flex: none;
    margin-left: 6px;
    display: flex;
    flex-direction: column;
}

.shelf {
    height: 27px;
    margin: 0 1px 7px 0;
    display: flex;
    background: #f9f9f9;
    border: 1px solid #d4d4d4;
}

.shelf-label {
    width: 124px;
    display: flex;
    align-items: center;
    gap: 7px;
    padding-left: 6px;
    color: #666;
    border-right: 1px solid #d4d4d4;
}

.shelf-pills {
    display: flex;
    align-items: center;
    gap: 2px;
    padding-left: 2px;
}

.pill--col {
    width: 148px;
    background: #00b180;
    color: #fff;
    font-size: 13px;
    letter-spacing: .3px;
    padding-left: 11px;
    border-radius: 0;
}

.pill--left {
    border-radius: 10px 0 0 10px;
}

.pill--right {
    border-radius: 0 10px 10px 0;
}

.viz {
    height: 519px;
    margin-left: -1px;
    background: #fff7bd;
    border: 1px solid #d4d4d4;
    border-width: 1px 2px 2px 1px;
    padding: 0 8px 0 9px;
}

.viz-title {
    margin: 0;
    height: 40px;
    padding: 10px 0 0 1px;
    font-size: 15.200px;
    font-weight: 400;
    line-height: 20px;
    color: #111;
}

.chart {
    width: 965px;
    border: 1px solid #c9c9d2;
    border-right-width: 2px;
}

.axis {
    position: relative;
    height: 55px;
    display: flex;
    flex-direction: column;
    align-items: center;
    justify-content: space-between;
    padding: 7px 0;
    background: #ffa77f;
    color: #222;
    line-height: 16px;
}

.axis--top {
    border-bottom: 1px solid #c9c9d2;
    padding-bottom: 6px;
}

.axis--bottom {
    border-top: 1px solid #c9c9d2;
}

.axis b {
    font-weight: 600;
}

.axis-tick {
    position: absolute;
    left: 481px;
    width: 1px;
    height: 6px;
    background: #fff;
}

.axis--top .axis-tick {
    bottom: 0;
}

.axis--bottom .axis-tick {
    top: 0;
}

.pane {
    height: 356px;
    background: #ffff7f;
}

.pie-labels text {
    font-family: "Open Sans", "Liberation Sans", sans-serif;
    font-size: 12.300px;
    text-anchor: middle;
    fill: #222;
}

/* sheet tabs */
.tabs {
    height: 30px;
    display: grid;
    grid-template-columns: 131px 56px 57px 57px 57px 57px 102px 71px 57px 32px 32px 32px;
    background: #e6e6e6;
    border-top: 2px solid #d4d4d4;
    border-bottom: 1px solid #d4d4d4;
    color: #777;
}

.tab {
    display: flex;
    align-items: center;
    justify-content: center;
    gap: 6px;
    padding-bottom: 2px;
    border-right: 1px solid #d0d0d0;
}

.tab--source {
    justify-content: flex-start;
    padding-left: 9px;
}

.tab--on {
    background: #f7f7f7;
    font-weight: 700;
    color: #555;
}

/* status bar */
.status {
    height: 20px;
    display: flex;
    align-items: center;
    background: #ececec;
    font-size: 11px;
    color: #444;
}

.status-item {
    white-space: nowrap;
    padding-bottom: 1px;
}

.status-item--marks {
    width: 67px;
    padding-left: 3px;
}

.status-item--rows {
    width: 106px;
}

.status-cells {
    margin-left: auto;
    height: 100%;
    display: flex;
}

.cell {
    height: 100%;
    border-left: 1px solid #d4d4d4;
}

.cell--a {
    width: 127px;
}

.cell--b {
    width: 27px;
}

.cell--c {
    width: 27px;
}

.cell--d {
    width: 47px;
}

.cell--nav {
    width: 71px;
    display: flex;
    align-items: center;
    justify-content: space-between;
    padding: 0 11px 0 9px;
}

.cell--views {
    width: 68px;
    display: flex;
    align-items: center;
    gap: 10px;
    padding-left: 8px;
}

/* windows taskbar */
.taskbar {
    height: 40px;
    display: flex;
    background: linear-gradient(90deg, #001c28, #001420 60%, #020f1e);
    color: #fff;
}

.start {
    width: 48px;
    display: flex;
    align-items: center;
    justify-content: center;
}

.task-search {
    width: 343px;
    margin-top: 1px;
    display: flex;
    align-items: center;
    gap: 11px;
    padding-left: 11px;
    background: #fff;
    border: 2px solid #b4b4b4;
    border-width: 2px 2px 1px;
    color: #222;
    font-size: 14px;
}

.task-apps {
    display: flex;
    margin-left: 1px;
}

.task-app {
    position: relative;
    width: 49px;
    height: 40px;
    display: flex;
    align-items: center;
    justify-content: center;
}

.task-app--sys {
    width: 48px;
}

.task-app--view {
    margin-right: 2px;
}

.task-app--on::after {
    content: "";
    position: absolute;
    left: 4px;
    right: 5px;
    bottom: 0;
    height: 2px;
    background: #76b9ed;
}

.task-app--active {
    width: 48px;
    margin-left: 1px;
    background: #33434f;
}

.task-app--active::after {
    left: 0;
    right: 0;
}

.tableau-tile {
    width: 24px;
    height: 24px;
    display: flex;
    align-items: center;
    justify-content: center;
    background: #eef1f3;
    color: #4f97c7;
}

.tray {
    margin-left: auto;
    display: flex;
    align-items: center;
}

.tray-up {
    margin-right: 1px;
}

.tray-box {
    width: 121px;
    height: 24px;
    display: flex;
    align-items: center;
    gap: 12px;
    padding-left: 11px;
    background: #0a0a0c;
    border-radius: 2px;
}

.tray-box svg:last-child {
    margin-left: -6px;
}

.clock {
    position: relative;
    width: 60px;
    margin-left: -15px;
    display: flex;
    flex-direction: column;
    align-items: center;
    line-height: 19px;
    font-size: 11.500px;
    white-space: nowrap;
}

.notify {
    position: relative;
    width: 58px;
    height: 40px;
    padding: 12px 0 0 17px;
}

.notify-badge {
    position: absolute;
    left: 24px;
    top: 19px;
    width: 16px;
    height: 16px;
    display: flex;
    align-items: center;
    justify-content: center;
    border-radius: 50%;
    background: #3b3b3b;
    font-size: 11px;
    font-weight: 700;
}
```
